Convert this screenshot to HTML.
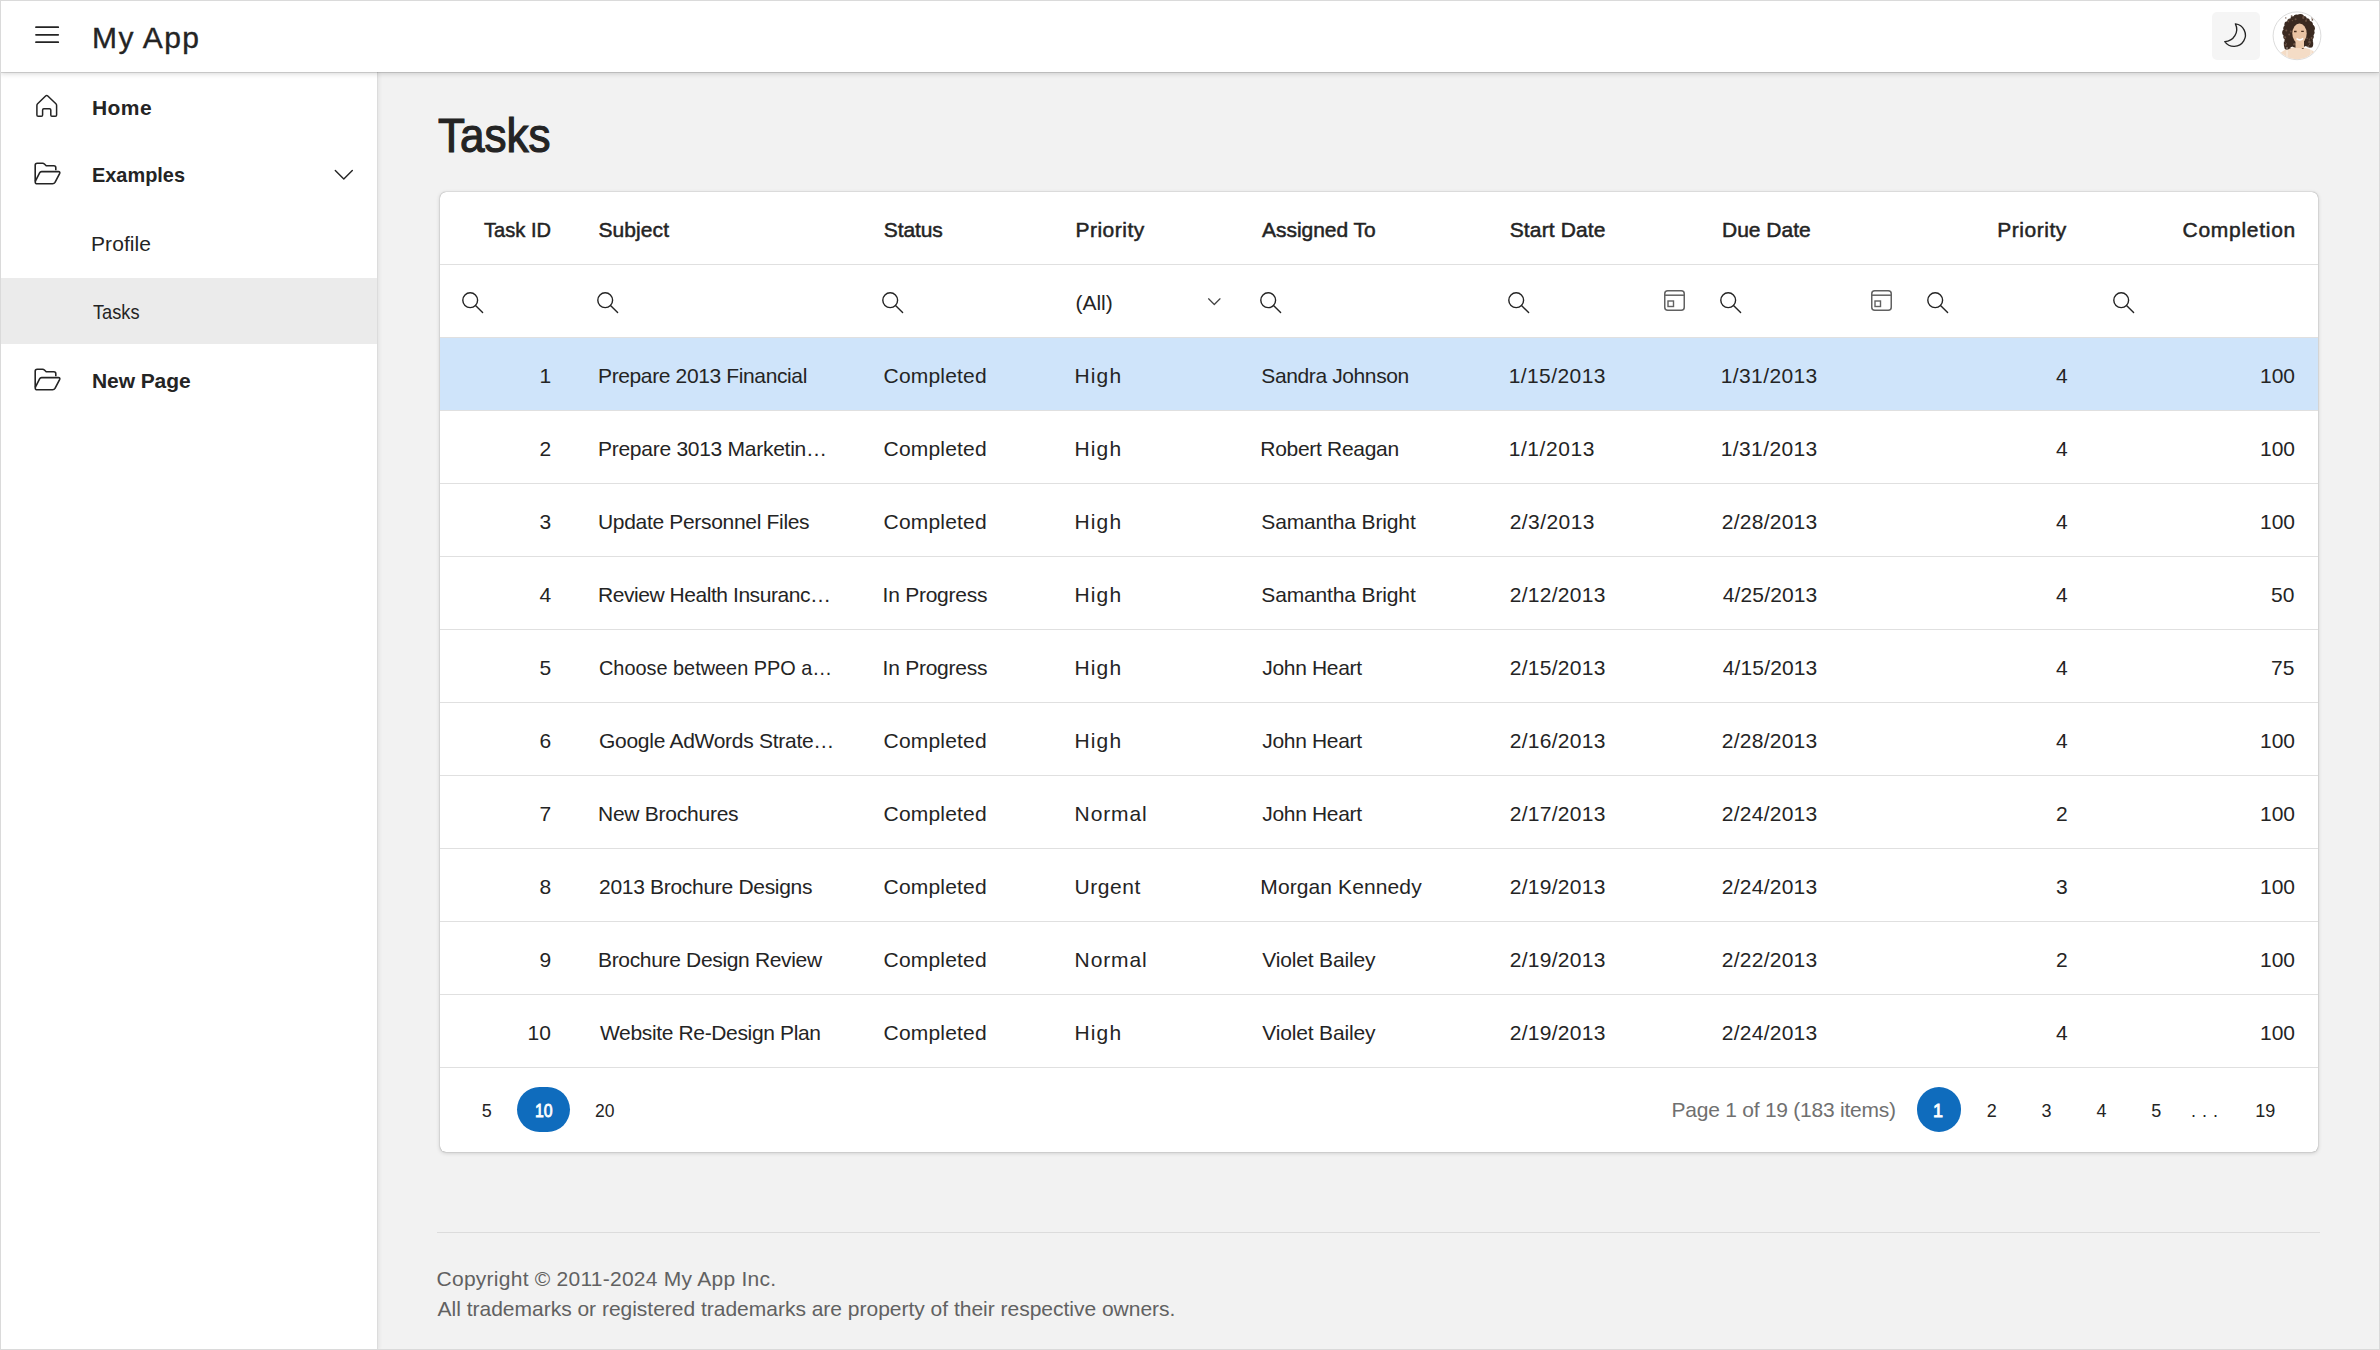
<!DOCTYPE html>
<html><head><meta charset="utf-8"><title>Tasks</title>
<style>
html,body{margin:0;padding:0}
body{width:2380px;height:1350px;overflow:hidden;position:relative;background:#f2f2f2;font-family:"Liberation Sans",sans-serif;color:#242424}
.t{position:absolute;white-space:pre;line-height:1;font-family:"Liberation Sans",sans-serif}
.abs{position:absolute}
svg{position:absolute;overflow:visible}
</style></head><body>
<!-- sidebar -->
<div class="abs" style="left:0;top:72px;width:377px;height:1278px;background:#fff;border-right:1px solid #dcdcdc;box-shadow:1px 0 4px rgba(0,0,0,.07)"></div>
<div class="abs" style="left:0;top:278px;width:377px;height:66px;background:#ebebeb"></div>
<!-- header -->
<div class="abs" style="left:0;top:0;width:2380px;height:72px;background:#fff;box-shadow:0 1px 0 rgba(0,0,0,.12),0 1px 6px rgba(0,0,0,.2)"></div>
<!-- card -->
<div class="abs" style="left:439.5px;top:191.5px;width:1878.5px;height:960.5px;background:#fff;border-radius:6px;box-shadow:0 0 1px rgba(0,0,0,.5),0 1px 4px rgba(0,0,0,.18);overflow:hidden">
</div>
<!-- grid lines & selected row -->
<div class="abs" style="left:440px;top:264px;width:1878px;height:1px;background:#e0e0e0"></div>
<div class="abs" style="left:440px;top:337px;width:1878px;height:1px;background:#e0e0e0"></div>
<div class="abs" style="left:440px;top:338px;width:1878px;height:72px;background:#cfe4fa"></div>
<div class="abs" style="left:440px;top:410px;width:1878px;height:1px;background:#e0e0e0"></div>
<div class="abs" style="left:440px;top:483px;width:1878px;height:1px;background:#e0e0e0"></div>
<div class="abs" style="left:440px;top:556px;width:1878px;height:1px;background:#e0e0e0"></div>
<div class="abs" style="left:440px;top:629px;width:1878px;height:1px;background:#e0e0e0"></div>
<div class="abs" style="left:440px;top:702px;width:1878px;height:1px;background:#e0e0e0"></div>
<div class="abs" style="left:440px;top:775px;width:1878px;height:1px;background:#e0e0e0"></div>
<div class="abs" style="left:440px;top:848px;width:1878px;height:1px;background:#e0e0e0"></div>
<div class="abs" style="left:440px;top:921px;width:1878px;height:1px;background:#e0e0e0"></div>
<div class="abs" style="left:440px;top:994px;width:1878px;height:1px;background:#e0e0e0"></div>
<div class="abs" style="left:440px;top:1067px;width:1878px;height:1px;background:#e0e0e0"></div>
<!-- pager -->
<div class="abs" style="left:517px;top:1087px;width:53px;height:45px;border-radius:23px;background:#0f6cbd"></div>
<div class="abs" style="left:1917px;top:1087px;width:44px;height:45px;border-radius:23px;background:#0f6cbd"></div>
<!-- footer line -->
<div class="abs" style="left:437px;top:1232px;width:1883px;height:1px;background:#dcdcdc"></div>
<svg style="left:35px;top:26px" width="25" height="18" viewBox="0 0 25 18"><path d="M1 1.2H23.2M1 8.8H23.2M1 16.2H23.2" stroke="#242424" stroke-width="1.8" stroke-linecap="round"/></svg>
<svg style="left:35px;top:94px" width="24" height="24" viewBox="0 0 24 24"><path d="M11.7 1.5 Q12.3 1.5 12.8 2 L20.9 9.8 Q21.6 10.5 21.6 11.6 V21 Q21.6 22.3 20.3 22.3 H17 Q15.8 22.3 15.8 21 V16 Q15.8 14.8 14.6 14.8 H8.8 Q7.6 14.8 7.6 16 V21 Q7.6 22.3 6.3 22.3 H3.2 Q1.9 22.3 1.9 21 V11.6 Q1.9 10.5 2.6 9.8 L10.6 2 Q11.1 1.5 11.7 1.5 Z" fill="none" stroke="#242424" stroke-width="1.5" stroke-linejoin="round"/></svg>
<svg style="left:34px;top:162px" width="27" height="23" viewBox="0 0 27 23"><path d="M1.2 19.5 V3.2 Q1.2 1.2 3.2 1.2 H8.6 Q9.6 1.2 10.4 2 L12.2 3.8 H19.8 Q21.8 3.8 21.8 5.8 V8.2" fill="none" stroke="#242424" stroke-width="1.6" stroke-linejoin="round"/><path d="M3.6 21.8 H18.6 Q20.2 21.8 21 20.4 L25.6 11.6 Q26.4 9.6 24.4 9.6 H7.6 Q6.2 9.6 5.6 10.8 L1.4 19.2 Q0.6 21.8 3.6 21.8 Z" fill="none" stroke="#242424" stroke-width="1.6" stroke-linejoin="round"/></svg>
<svg style="left:34px;top:368px" width="27" height="23" viewBox="0 0 27 23"><path d="M1.2 19.5 V3.2 Q1.2 1.2 3.2 1.2 H8.6 Q9.6 1.2 10.4 2 L12.2 3.8 H19.8 Q21.8 3.8 21.8 5.8 V8.2" fill="none" stroke="#242424" stroke-width="1.6" stroke-linejoin="round"/><path d="M3.6 21.8 H18.6 Q20.2 21.8 21 20.4 L25.6 11.6 Q26.4 9.6 24.4 9.6 H7.6 Q6.2 9.6 5.6 10.8 L1.4 19.2 Q0.6 21.8 3.6 21.8 Z" fill="none" stroke="#242424" stroke-width="1.6" stroke-linejoin="round"/></svg>
<svg style="left:334px;top:169px" width="20" height="12" viewBox="0 0 20 12"><path d="M1.3 1.5 L9.8 10 L18.3 1.5" fill="none" stroke="#242424" stroke-width="1.4" stroke-linecap="round" stroke-linejoin="round"/></svg>
<svg style="left:462px;top:291.7px" width="22" height="22" viewBox="0 0 22 22"><circle cx="8.2" cy="8.2" r="7.4" fill="none" stroke="#242424" stroke-width="1.4"/><path d="M13.5 13.5 L20.6 20.6" stroke="#242424" stroke-width="1.4" stroke-linecap="round"/></svg>
<svg style="left:597px;top:291.7px" width="22" height="22" viewBox="0 0 22 22"><circle cx="8.2" cy="8.2" r="7.4" fill="none" stroke="#242424" stroke-width="1.4"/><path d="M13.5 13.5 L20.6 20.6" stroke="#242424" stroke-width="1.4" stroke-linecap="round"/></svg>
<svg style="left:882px;top:291.7px" width="22" height="22" viewBox="0 0 22 22"><circle cx="8.2" cy="8.2" r="7.4" fill="none" stroke="#242424" stroke-width="1.4"/><path d="M13.5 13.5 L20.6 20.6" stroke="#242424" stroke-width="1.4" stroke-linecap="round"/></svg>
<svg style="left:1260px;top:291.7px" width="22" height="22" viewBox="0 0 22 22"><circle cx="8.2" cy="8.2" r="7.4" fill="none" stroke="#242424" stroke-width="1.4"/><path d="M13.5 13.5 L20.6 20.6" stroke="#242424" stroke-width="1.4" stroke-linecap="round"/></svg>
<svg style="left:1508px;top:291.7px" width="22" height="22" viewBox="0 0 22 22"><circle cx="8.2" cy="8.2" r="7.4" fill="none" stroke="#242424" stroke-width="1.4"/><path d="M13.5 13.5 L20.6 20.6" stroke="#242424" stroke-width="1.4" stroke-linecap="round"/></svg>
<svg style="left:1720px;top:291.7px" width="22" height="22" viewBox="0 0 22 22"><circle cx="8.2" cy="8.2" r="7.4" fill="none" stroke="#242424" stroke-width="1.4"/><path d="M13.5 13.5 L20.6 20.6" stroke="#242424" stroke-width="1.4" stroke-linecap="round"/></svg>
<svg style="left:1927px;top:291.7px" width="22" height="22" viewBox="0 0 22 22"><circle cx="8.2" cy="8.2" r="7.4" fill="none" stroke="#242424" stroke-width="1.4"/><path d="M13.5 13.5 L20.6 20.6" stroke="#242424" stroke-width="1.4" stroke-linecap="round"/></svg>
<svg style="left:2113px;top:291.7px" width="22" height="22" viewBox="0 0 22 22"><circle cx="8.2" cy="8.2" r="7.4" fill="none" stroke="#242424" stroke-width="1.4"/><path d="M13.5 13.5 L20.6 20.6" stroke="#242424" stroke-width="1.4" stroke-linecap="round"/></svg>
<svg style="left:1663.5px;top:289.8px" width="22" height="22" viewBox="0 0 22 22"><rect x="0.75" y="0.75" width="19.5" height="19.5" rx="3" fill="none" stroke="#616161" stroke-width="1.5"/><path d="M1 5.2 H20" stroke="#616161" stroke-width="1.5"/><rect x="4" y="11" width="5.5" height="5.5" fill="none" stroke="#616161" stroke-width="1.4"/></svg>
<svg style="left:1870.5px;top:289.8px" width="22" height="22" viewBox="0 0 22 22"><rect x="0.75" y="0.75" width="19.5" height="19.5" rx="3" fill="none" stroke="#616161" stroke-width="1.5"/><path d="M1 5.2 H20" stroke="#616161" stroke-width="1.5"/><rect x="4" y="11" width="5.5" height="5.5" fill="none" stroke="#616161" stroke-width="1.4"/></svg>
<svg style="left:1207px;top:297px" width="15" height="10" viewBox="0 0 15 10"><path d="M1.6 1.8 L7.3 7.5 L13 1.8" fill="none" stroke="#424242" stroke-width="1.25" stroke-linecap="round" stroke-linejoin="round"/></svg>
<div class="abs" style="left:2212px;top:12px;width:48px;height:48px;border-radius:5px;background:#f5f5f5"></div>
<svg style="left:2212px;top:12px" width="48" height="48" viewBox="0 0 48 48"><path d="M23.4 11.9 A11.3 11.3 0 1 1 12.8 29.6 A12.3 12.3 0 0 0 23.4 11.9 Z" fill="none" stroke="#242424" stroke-width="1.35" stroke-linejoin="round"/></svg>
<svg style="left:2272px;top:11px" width="50" height="50" viewBox="0 0 50 50"><defs><clipPath id="av"><circle cx="25" cy="24.8" r="23.4"/></clipPath></defs><circle cx="25" cy="24.8" r="23.9" fill="#fff" stroke="#dcdcdc" stroke-width="1"/><g clip-path="url(#av)"><ellipse cx="26" cy="48" rx="20" ry="12" fill="#f4dcc6"/><ellipse cx="26.5" cy="21.5" rx="14" ry="15.5" fill="#3b2a21"/><circle cx="39.5" cy="21.5" r="3.1" fill="#3b2a21"/><circle cx="39.0" cy="25.7" r="2.8" fill="#3b2a21"/><circle cx="37.4" cy="29.6" r="3.5" fill="#3b2a21"/><circle cx="35.0" cy="32.8" r="2.7" fill="#3b2a21"/><circle cx="18.0" cy="32.8" r="3.4" fill="#3b2a21"/><circle cx="15.6" cy="29.6" r="3.1" fill="#3b2a21"/><circle cx="14.0" cy="25.7" r="2.7" fill="#3b2a21"/><circle cx="13.5" cy="21.5" r="3.3" fill="#3b2a21"/><circle cx="14.0" cy="17.3" r="2.7" fill="#3b2a21"/><circle cx="15.6" cy="13.4" r="3.2" fill="#3b2a21"/><circle cx="18.0" cy="10.2" r="2.7" fill="#3b2a21"/><circle cx="21.1" cy="7.9" r="2.7" fill="#3b2a21"/><circle cx="24.6" cy="6.7" r="3.2" fill="#3b2a21"/><circle cx="28.4" cy="6.7" r="3.8" fill="#3b2a21"/><circle cx="31.9" cy="7.9" r="2.8" fill="#3b2a21"/><circle cx="35.0" cy="10.2" r="2.9" fill="#3b2a21"/><circle cx="37.4" cy="13.4" r="3.5" fill="#3b2a21"/><circle cx="39.0" cy="17.3" r="3.9" fill="#3b2a21"/><path d="M12 30 Q11 38 15 39 L19 37 Z" fill="#3b2a21"/><path d="M41 30 Q42 36 39 37 L35 36 Z" fill="#3b2a21"/><circle cx="40.3" cy="6.5" r="1.2" fill="#6a5244"/><circle cx="20.4" cy="9.6" r="0.7" fill="#6a5244"/><circle cx="17.2" cy="23.6" r="1.0" fill="#6a5244"/><circle cx="13.8" cy="6.9" r="0.7" fill="#6a5244"/><circle cx="35.0" cy="27.4" r="0.8" fill="#6a5244"/><circle cx="37.4" cy="28.3" r="0.8" fill="#6a5244"/><circle cx="40.4" cy="8.8" r="0.9" fill="#6a5244"/><circle cx="34.0" cy="9.9" r="0.9" fill="#6a5244"/><circle cx="13.1" cy="26.4" r="1.1" fill="#6a5244"/><circle cx="28.6" cy="33.0" r="0.8" fill="#6a5244"/><circle cx="36.4" cy="35.2" r="0.9" fill="#6a5244"/><circle cx="31.3" cy="6.9" r="1.1" fill="#6a5244"/><circle cx="30.8" cy="36.8" r="1.2" fill="#6a5244"/><circle cx="31.4" cy="5.7" r="0.9" fill="#6a5244"/><circle cx="16.9" cy="8.7" r="0.6" fill="#6a5244"/><circle cx="34.3" cy="9.1" r="0.8" fill="#6a5244"/><circle cx="14.3" cy="19.4" r="1.0" fill="#6a5244"/><circle cx="37.6" cy="31.2" r="1.2" fill="#6a5244"/><circle cx="22.4" cy="33.3" r="1.3" fill="#6a5244"/><circle cx="16.4" cy="10.6" r="0.8" fill="#6a5244"/><circle cx="18.8" cy="20.5" r="1.0" fill="#6a5244"/><circle cx="19.6" cy="5.1" r="0.9" fill="#6a5244"/><circle cx="39.6" cy="27.1" r="1.0" fill="#6a5244"/><circle cx="13.6" cy="33.8" r="1.1" fill="#6a5244"/><circle cx="37.4" cy="30.5" r="0.9" fill="#6a5244"/><circle cx="23.6" cy="8.3" r="1.0" fill="#6a5244"/><ellipse cx="27.5" cy="22.5" rx="7.2" ry="10" fill="#e9c3a4"/><rect x="23.5" y="29" width="8.5" height="8" fill="#ecc9ab"/><path d="M24.5 27.6 Q28 30.2 31.2 27.4" stroke="#fff" stroke-width="1.5" fill="none"/><path d="M22 20.5 h2.6 M29.2 20.3 h2.6" stroke="#4a3020" stroke-width="1.3"/><path d="M15 36 v12 M39 36 v12" stroke="#fff" stroke-width="0.8" opacity=".7"/></g></svg>
<div class="t" style="left:92.00px;top:22.80px;font-size:30px;letter-spacing:1.400px;-webkit-text-stroke:0.35px #242424;">My App</div>
<div class="t" style="left:92.00px;top:97.10px;font-size:21px;font-weight:700;letter-spacing:0.433px;">Home</div>
<div class="t" style="left:92.05px;top:163.60px;font-size:21px;font-weight:700;transform:scaleX(0.9485);transform-origin:0 0;">Examples</div>
<div class="t" style="left:91.00px;top:232.80px;font-size:21px;letter-spacing:0.067px;">Profile</div>
<div class="t" style="left:93.00px;top:300.90px;font-size:21px;transform:scaleX(0.8679);transform-origin:0 0;">Tasks</div>
<div class="t" style="left:92.00px;top:369.80px;font-size:21px;font-weight:700;letter-spacing:-0.086px;">New Page</div>
<div class="t" style="left:437.50px;top:111.70px;font-size:48px;transform:scaleX(0.9180);transform-origin:0 0;-webkit-text-stroke:1.2px #242424;">Tasks</div>
<div class="t" style="left:484.20px;top:218.70px;font-size:21px;transform:scaleX(0.9565);transform-origin:0 0;-webkit-text-stroke:0.5px #242424;">Task ID</div>
<div class="t" style="left:598.50px;top:218.70px;font-size:21px;letter-spacing:0.083px;-webkit-text-stroke:0.5px #242424;">Subject</div>
<div class="t" style="left:883.80px;top:218.70px;font-size:21px;letter-spacing:-0.100px;-webkit-text-stroke:0.5px #242424;">Status</div>
<div class="t" style="left:1075.40px;top:218.70px;font-size:21px;letter-spacing:0.514px;-webkit-text-stroke:0.5px #242424;">Priority</div>
<div class="t" style="left:1262.00px;top:218.70px;font-size:21px;letter-spacing:-0.040px;-webkit-text-stroke:0.5px #242424;">Assigned To</div>
<div class="t" style="left:1509.70px;top:218.70px;font-size:21px;letter-spacing:0.144px;-webkit-text-stroke:0.5px #242424;">Start Date</div>
<div class="t" style="left:1722.00px;top:218.70px;font-size:21px;-webkit-text-stroke:0.5px #242424;">Due Date</div>
<div class="t" style="left:1997.20px;top:218.70px;font-size:21px;letter-spacing:0.543px;-webkit-text-stroke:0.5px #242424;">Priority</div>
<div class="t" style="left:2182.50px;top:218.70px;font-size:21px;letter-spacing:0.722px;-webkit-text-stroke:0.5px #242424;">Completion</div>
<div class="t" style="left:1075.40px;top:291.80px;font-size:21px;">(All)</div>
<div class="t" style="left:539.50px;top:364.70px;font-size:21px;">1</div>
<div class="t" style="left:598.00px;top:364.70px;font-size:21px;letter-spacing:-0.371px;">Prepare 2013 Financial</div>
<div class="t" style="left:883.60px;top:364.70px;font-size:21px;letter-spacing:0.188px;">Completed</div>
<div class="t" style="left:1074.60px;top:364.70px;font-size:21px;letter-spacing:1.100px;">High</div>
<div class="t" style="left:1261.30px;top:364.70px;font-size:21px;letter-spacing:-0.385px;">Sandra Johnson</div>
<div class="t" style="left:1508.70px;top:364.70px;font-size:21px;letter-spacing:0.412px;">1/15/2013</div>
<div class="t" style="left:1720.80px;top:364.70px;font-size:21px;letter-spacing:0.375px;">1/31/2013</div>
<div class="t" style="left:2056.00px;top:364.70px;font-size:21px;">4</div>
<div class="t" style="left:2260.00px;top:364.70px;font-size:21px;">100</div>
<div class="t" style="left:539.50px;top:437.70px;font-size:21px;">2</div>
<div class="t" style="left:598.00px;top:437.70px;font-size:21px;letter-spacing:-0.271px;">Prepare 3013 Marketin…</div>
<div class="t" style="left:883.60px;top:437.70px;font-size:21px;letter-spacing:0.188px;">Completed</div>
<div class="t" style="left:1074.60px;top:437.70px;font-size:21px;letter-spacing:1.100px;">High</div>
<div class="t" style="left:1260.30px;top:437.70px;font-size:21px;letter-spacing:-0.300px;">Robert Reagan</div>
<div class="t" style="left:1508.70px;top:437.70px;font-size:21px;letter-spacing:0.571px;">1/1/2013</div>
<div class="t" style="left:1720.80px;top:437.70px;font-size:21px;letter-spacing:0.375px;">1/31/2013</div>
<div class="t" style="left:2056.00px;top:437.70px;font-size:21px;">4</div>
<div class="t" style="left:2260.00px;top:437.70px;font-size:21px;">100</div>
<div class="t" style="left:539.50px;top:510.70px;font-size:21px;">3</div>
<div class="t" style="left:598.00px;top:510.70px;font-size:21px;letter-spacing:-0.319px;">Update Personnel Files</div>
<div class="t" style="left:883.60px;top:510.70px;font-size:21px;letter-spacing:0.188px;">Completed</div>
<div class="t" style="left:1074.60px;top:510.70px;font-size:21px;letter-spacing:1.100px;">High</div>
<div class="t" style="left:1261.30px;top:510.70px;font-size:21px;letter-spacing:-0.143px;">Samantha Bright</div>
<div class="t" style="left:1509.70px;top:510.70px;font-size:21px;letter-spacing:0.429px;">2/3/2013</div>
<div class="t" style="left:1721.80px;top:510.70px;font-size:21px;letter-spacing:0.250px;">2/28/2013</div>
<div class="t" style="left:2056.00px;top:510.70px;font-size:21px;">4</div>
<div class="t" style="left:2260.00px;top:510.70px;font-size:21px;">100</div>
<div class="t" style="left:539.50px;top:583.70px;font-size:21px;">4</div>
<div class="t" style="left:598.00px;top:583.70px;font-size:21px;letter-spacing:-0.445px;">Review Health Insuranc…</div>
<div class="t" style="left:882.60px;top:583.70px;font-size:21px;letter-spacing:-0.250px;">In Progress</div>
<div class="t" style="left:1074.60px;top:583.70px;font-size:21px;letter-spacing:1.100px;">High</div>
<div class="t" style="left:1261.30px;top:583.70px;font-size:21px;letter-spacing:-0.143px;">Samantha Bright</div>
<div class="t" style="left:1509.70px;top:583.70px;font-size:21px;letter-spacing:0.287px;">2/12/2013</div>
<div class="t" style="left:1722.80px;top:583.70px;font-size:21px;letter-spacing:0.125px;">4/25/2013</div>
<div class="t" style="left:2056.00px;top:583.70px;font-size:21px;">4</div>
<div class="t" style="left:2271.00px;top:583.70px;font-size:21px;">50</div>
<div class="t" style="left:539.50px;top:656.70px;font-size:21px;">5</div>
<div class="t" style="left:599.05px;top:656.70px;font-size:21px;transform:scaleX(0.9465);transform-origin:0 0;">Choose between PPO a…</div>
<div class="t" style="left:882.60px;top:656.70px;font-size:21px;letter-spacing:-0.250px;">In Progress</div>
<div class="t" style="left:1074.60px;top:656.70px;font-size:21px;letter-spacing:1.100px;">High</div>
<div class="t" style="left:1262.30px;top:656.70px;font-size:21px;letter-spacing:-0.333px;">John Heart</div>
<div class="t" style="left:1509.70px;top:656.70px;font-size:21px;letter-spacing:0.287px;">2/15/2013</div>
<div class="t" style="left:1722.80px;top:656.70px;font-size:21px;letter-spacing:0.125px;">4/15/2013</div>
<div class="t" style="left:2056.00px;top:656.70px;font-size:21px;">4</div>
<div class="t" style="left:2271.00px;top:656.70px;font-size:21px;">75</div>
<div class="t" style="left:539.50px;top:729.70px;font-size:21px;">6</div>
<div class="t" style="left:599.00px;top:729.70px;font-size:21px;letter-spacing:-0.281px;">Google AdWords Strate…</div>
<div class="t" style="left:883.60px;top:729.70px;font-size:21px;letter-spacing:0.188px;">Completed</div>
<div class="t" style="left:1074.60px;top:729.70px;font-size:21px;letter-spacing:1.100px;">High</div>
<div class="t" style="left:1262.30px;top:729.70px;font-size:21px;letter-spacing:-0.333px;">John Heart</div>
<div class="t" style="left:1509.70px;top:729.70px;font-size:21px;letter-spacing:0.287px;">2/16/2013</div>
<div class="t" style="left:1721.80px;top:729.70px;font-size:21px;letter-spacing:0.250px;">2/28/2013</div>
<div class="t" style="left:2056.00px;top:729.70px;font-size:21px;">4</div>
<div class="t" style="left:2260.00px;top:729.70px;font-size:21px;">100</div>
<div class="t" style="left:539.50px;top:802.70px;font-size:21px;">7</div>
<div class="t" style="left:598.00px;top:802.70px;font-size:21px;letter-spacing:-0.250px;">New Brochures</div>
<div class="t" style="left:883.60px;top:802.70px;font-size:21px;letter-spacing:0.188px;">Completed</div>
<div class="t" style="left:1074.60px;top:802.70px;font-size:21px;letter-spacing:0.880px;">Normal</div>
<div class="t" style="left:1262.30px;top:802.70px;font-size:21px;letter-spacing:-0.333px;">John Heart</div>
<div class="t" style="left:1509.70px;top:802.70px;font-size:21px;letter-spacing:0.287px;">2/17/2013</div>
<div class="t" style="left:1721.80px;top:802.70px;font-size:21px;letter-spacing:0.250px;">2/24/2013</div>
<div class="t" style="left:2056.00px;top:802.70px;font-size:21px;">2</div>
<div class="t" style="left:2260.00px;top:802.70px;font-size:21px;">100</div>
<div class="t" style="left:539.50px;top:875.70px;font-size:21px;">8</div>
<div class="t" style="left:599.00px;top:875.70px;font-size:21px;letter-spacing:-0.300px;">2013 Brochure Designs</div>
<div class="t" style="left:883.60px;top:875.70px;font-size:21px;letter-spacing:0.188px;">Completed</div>
<div class="t" style="left:1074.60px;top:875.70px;font-size:21px;letter-spacing:0.520px;">Urgent</div>
<div class="t" style="left:1260.30px;top:875.70px;font-size:21px;letter-spacing:0.108px;">Morgan Kennedy</div>
<div class="t" style="left:1509.70px;top:875.70px;font-size:21px;letter-spacing:0.287px;">2/19/2013</div>
<div class="t" style="left:1721.80px;top:875.70px;font-size:21px;letter-spacing:0.250px;">2/24/2013</div>
<div class="t" style="left:2056.00px;top:875.70px;font-size:21px;">3</div>
<div class="t" style="left:2260.00px;top:875.70px;font-size:21px;">100</div>
<div class="t" style="left:539.50px;top:948.70px;font-size:21px;">9</div>
<div class="t" style="left:598.00px;top:948.70px;font-size:21px;letter-spacing:-0.333px;">Brochure Design Review</div>
<div class="t" style="left:883.60px;top:948.70px;font-size:21px;letter-spacing:0.188px;">Completed</div>
<div class="t" style="left:1074.60px;top:948.70px;font-size:21px;letter-spacing:0.880px;">Normal</div>
<div class="t" style="left:1262.30px;top:948.70px;font-size:21px;letter-spacing:-0.167px;">Violet Bailey</div>
<div class="t" style="left:1509.70px;top:948.70px;font-size:21px;letter-spacing:0.287px;">2/19/2013</div>
<div class="t" style="left:1721.80px;top:948.70px;font-size:21px;letter-spacing:0.250px;">2/22/2013</div>
<div class="t" style="left:2056.00px;top:948.70px;font-size:21px;">2</div>
<div class="t" style="left:2260.00px;top:948.70px;font-size:21px;">100</div>
<div class="t" style="left:527.50px;top:1021.70px;font-size:21px;">10</div>
<div class="t" style="left:600.00px;top:1021.70px;font-size:21px;letter-spacing:-0.352px;">Website Re-Design Plan</div>
<div class="t" style="left:883.60px;top:1021.70px;font-size:21px;letter-spacing:0.188px;">Completed</div>
<div class="t" style="left:1074.60px;top:1021.70px;font-size:21px;letter-spacing:1.100px;">High</div>
<div class="t" style="left:1262.30px;top:1021.70px;font-size:21px;letter-spacing:-0.167px;">Violet Bailey</div>
<div class="t" style="left:1509.70px;top:1021.70px;font-size:21px;letter-spacing:0.287px;">2/19/2013</div>
<div class="t" style="left:1721.80px;top:1021.70px;font-size:21px;letter-spacing:0.250px;">2/24/2013</div>
<div class="t" style="left:2056.00px;top:1021.70px;font-size:21px;">4</div>
<div class="t" style="left:2260.00px;top:1021.70px;font-size:21px;">100</div>
<div class="t" style="left:481.70px;top:1102.00px;font-size:18px;">5</div>
<div class="t" style="left:534.92px;top:1102.00px;font-size:18px;transform:scaleX(0.8789);transform-origin:0 0;color:#fff;-webkit-text-stroke:0.8px #fff;">10</div>
<div class="t" style="left:595.43px;top:1102.00px;font-size:18px;transform:scaleX(0.9737);transform-origin:0 0;">20</div>
<div class="t" style="left:1671.60px;top:1099.00px;font-size:21px;letter-spacing:-0.243px;color:#707070;">Page 1 of 19 (183 items)</div>
<div class="t" style="left:1933.00px;top:1102.00px;font-size:18px;color:#fff;-webkit-text-stroke:0.8px #fff;">1</div>
<div class="t" style="left:1986.70px;top:1102.00px;font-size:18px;">2</div>
<div class="t" style="left:2041.60px;top:1102.00px;font-size:18px;">3</div>
<div class="t" style="left:2096.50px;top:1102.00px;font-size:18px;">4</div>
<div class="t" style="left:2151.20px;top:1102.00px;font-size:18px;">5</div>
<div class="t" style="left:2255.20px;top:1102.00px;font-size:18px;">19</div>
<div class="t" style="left:2191.00px;top:1102.00px;font-size:18px;letter-spacing:0.500px;">. . .</div>
<div class="t" style="left:436.60px;top:1267.50px;font-size:21px;letter-spacing:0.250px;color:#616161;">Copyright © 2011-2024 My App Inc.</div>
<div class="t" style="left:437.60px;top:1297.80px;font-size:21px;letter-spacing:-0.013px;color:#616161;">All trademarks or registered trademarks are property of their respective owners.</div>
<!-- frame -->
<div class="abs" style="left:0;top:0;width:2378px;height:1348px;border:1px solid #dadada"></div>
</body></html>
